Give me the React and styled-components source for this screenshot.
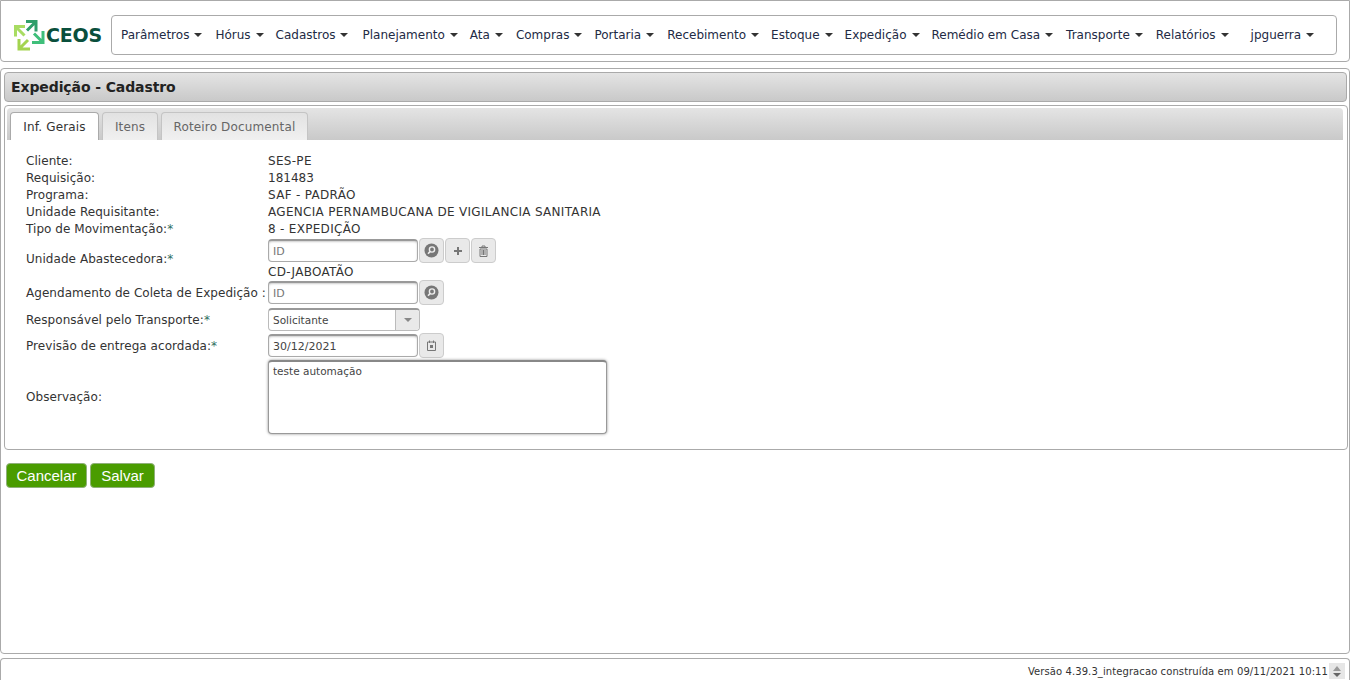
import React from 'react'
import styled, { createGlobalStyle } from 'styled-components'

const GlobalStyle = createGlobalStyle`
  html, body { margin: 0; padding: 0; height: 100%; background: #fff; }
  body {
    font-family: "DejaVu Sans", Verdana, sans-serif;
    font-size: 12px;
    color: #333;
  }
`

const Page = styled.div`
  height: 680px;
  display: flex;
  flex-direction: column;
  overflow: hidden;
`

const Header = styled.header`
  height: 62px;
  box-sizing: border-box;
  border: 1px solid #aaa;
  border-radius: 0 0 4px 4px;
  display: flex;
  align-items: center;
  padding: 7px 12px 0 13px;
  flex: none;
`

const Logo = styled.div`
  width: 97px;
  height: 32px;
  box-sizing: border-box;
  padding-top: 2px;
  display: flex;
  align-items: center;
  flex: none;
`

const LogoText = styled.span`
  font-family: "DejaVu Sans", sans-serif;
  font-weight: 700;
  font-size: 19px;
  line-height: 1;
  color: #0a4f3c;
  margin-left: 1px;
  letter-spacing: -0.2px;
`

const Nav = styled.nav`
  flex: 1;
  height: 40px;
  box-sizing: border-box;
  border: 1px solid #aaa;
  border-radius: 4px;
  display: flex;
  align-items: center;
  padding-left: 9px;
`

const NavItem = styled.span`
  display: flex;
  align-items: center;
  color: #222a44;
  white-space: nowrap;
  margin-right: ${p => p.$gap}px;
`

const Caret = styled.span`
  width: 0;
  height: 0;
  margin-left: 5px;
  border-left: 4px solid transparent;
  border-right: 4px solid transparent;
  border-top: 4px solid #333;
`

const Main = styled.main`
  flex: 1;
  margin: 6px 0 4px;
  box-sizing: border-box;
  border: 1px solid #aaa;
  border-radius: 4px;
  padding: 3px 1px 0 3px;
  display: flex;
  flex-direction: column;
`

const TitleBar = styled.div`
  height: 30px;
  box-sizing: border-box;
  border: 1px solid #aaa;
  border-radius: 4px;
  background: linear-gradient(#e4e4e4, #c9c9c9);
  display: flex;
  align-items: center;
  padding-left: 6px;
  margin-right: 1px;
  font-size: 14px;
  font-weight: 700;
  letter-spacing: -0.1px;
  color: #222;
`

const TabPanel = styled.section`
  margin-top: 3px;
  height: 345px;
  box-sizing: border-box;
  border: 1px solid #aaa;
  border-radius: 4px;
  padding: 2px;
`

const TabBar = styled.div`
  height: 32px;
  box-sizing: border-box;
  border-radius: 4px 4px 0 0;
  background: linear-gradient(#e4e4e4, #c9c9c9);
  margin-right: 2px;
  padding: 4px 0 0 3px;
  display: flex;
  gap: 3px;
`

const Tab = styled.div`
  box-sizing: border-box;
  height: 28px;
  width: ${p => p.$w}px;
  display: flex;
  align-items: center;
  justify-content: center;
  letter-spacing: 0.15px;
  border: 1px solid #c4c4c4;
  border-bottom: none;
  border-radius: 4px 4px 0 0;
  background: ${p => (p.$active ? '#fff' : 'linear-gradient(#e2e2e2, #f0f0f0)')};
  color: ${p => (p.$active ? '#333' : '#666')};
  ${p => p.$active && 'border-color: #aaa;'}
`

const Form = styled.div`
  padding: 12px 0 0 19px;
  display: flex;
  flex-direction: column;
`

const Row = styled.div`
  display: grid;
  grid-template-columns: 242px 1fr;
  align-items: center;
  min-height: 17px;
  margin-bottom: ${p => p.$mb || 0}px;
`

const Label = styled.span`
  color: #333;
  white-space: nowrap;
  letter-spacing: 0.05px;
`

const Req = styled.span`
  color: #2f6f5f;
`

const Value = styled.span`
  color: #333;
  letter-spacing: ${p => (p.$caps ? '0.3px' : '0')};
`

const Stack = styled.div`
  display: flex;
  flex-direction: column;
`

const StackedValue = styled(Value)`
  margin-top: 2px;
  line-height: 15px;
`

const Controls = styled.div`
  display: flex;
  align-items: center;
`

const Input = styled.div`
  box-sizing: border-box;
  width: 150px;
  height: 23px;
  border: 1px solid #aaa;
  border-top: 2px solid #999;
  border-radius: 4px;
  background: #fff;
  padding: 0 4px;
  display: flex;
  align-items: center;
  font-size: 11px;
  color: ${p => (p.$hint ? '#777' : '#444')};
  box-shadow: inset 0 1px 2px rgba(0, 0, 0, 0.2);
`

const IconButton = styled.div`
  box-sizing: border-box;
  width: 25px;
  height: 25px;
  margin-left: 1px;
  border: 1px solid #ccc;
  border-radius: 4px;
  background: #e9e9e9;
  display: flex;
  align-items: center;
  justify-content: center;
`

const Select = styled.div`
  box-sizing: border-box;
  width: 152px;
  height: 23px;
  border: 1px solid #bbb;
  border-top: 2px solid #999;
  border-radius: 4px;
  background: #fff;
  display: flex;
  align-items: stretch;
  font-size: 10.5px;
  color: #444;
`

const SelectText = styled.span`
  flex: 1;
  padding-left: 4px;
  display: flex;
  align-items: center;
`

const SelectArrow = styled.span`
  width: 23px;
  border-left: 1px solid #bbb;
  background: #e9e9e9;
  border-radius: 0 3px 3px 0;
  display: flex;
  align-items: center;
  justify-content: center;
  &::after {
    content: '';
    border-left: 4px solid transparent;
    border-right: 4px solid transparent;
    border-top: 4px solid #888;
  }
`

const TextArea = styled.div`
  box-sizing: border-box;
  width: 339px;
  height: 74px;
  border: 1px solid #999;
  border-top: 2px solid #888;
  border-radius: 4px;
  background: #fff;
  padding: 3px 4px;
  font-size: 10.5px;
  color: #444;
  box-shadow: 0 0 3px rgba(0, 0, 0, 0.45);
`

const Actions = styled.div`
  display: flex;
  gap: 3px;
  padding: 13px 0 0 2px;
`

const GreenButton = styled.div`
  box-sizing: border-box;
  height: 25px;
  width: ${p => p.$w}px;
  border: 1px solid #8fb07a;
  border-radius: 4px;
  background: #4a9c00;
  color: #fff;
  font-family: "Liberation Sans", Arial, sans-serif;
  font-size: 15px;
  display: flex;
  align-items: center;
  justify-content: center;
`

const Footer = styled.footer`
  height: 22px;
  box-sizing: border-box;
  border: 1px solid #aaa;
  border-bottom: none;
  border-radius: 4px 4px 0 0;
  display: flex;
  align-items: center;
  justify-content: flex-end;
  padding: 3px 4px 0 0;
  font-size: 10px;
  letter-spacing: 0.09px;
  color: #333;
  flex: none;
`

const Spinner = styled.div`
  width: 16px;
  height: 16px;
  margin-left: 1px;
  background: #e6e6e6;
  display: flex;
  flex-direction: column;
  align-items: center;
  justify-content: center;
  gap: 2px;
`

const SpinUp = styled.span`
  border-left: 4px solid transparent;
  border-right: 4px solid transparent;
  border-bottom: 5px solid #999;
`

const SpinDown = styled.span`
  border-left: 4px solid transparent;
  border-right: 4px solid transparent;
  border-top: 4px solid #666;
`

const LogoMark = () => (
  <svg width="31" height="31" viewBox="0 0 31 31" fill="none" strokeWidth="3">
    <path d="M12 1.5h10v10M22 1.5L13 10.5" stroke="#2f9e6a" />
    <path d="M11 6.5H1.5v10M1.5 6.5l9 9" stroke="#a8dc62" />
    <path d="M29 11v11.5H18M29 22.5l-9-9" stroke="#3fbf7a" />
    <path d="M5 19v10h11M5 29l9-9" stroke="#a3d44f" />
  </svg>
)

const SearchIcon = () => (
  <svg width="15" height="15" viewBox="0 0 15 15">
    <circle cx="7.5" cy="7.5" r="7" fill="#777" />
    <circle cx="8" cy="6.5" r="2.6" fill="none" stroke="#eee" strokeWidth="1.4" />
    <path d="M6 8.6L4 10.8" stroke="#eee" strokeWidth="1.6" />
  </svg>
)

const PlusIcon = () => (
  <svg width="10" height="10" viewBox="0 0 10 10">
    <path d="M5 1v8M1 5h8" stroke="#777" strokeWidth="2" />
  </svg>
)

const TrashIcon = () => (
  <svg width="11" height="12" viewBox="0 0 11 12">
    <path d="M1 2.5h9M4 2V1h3v1" stroke="#777" strokeWidth="1" fill="none" />
    <path d="M2 4h7v7.5H2zM4 5v5M5.5 5v5M7 5v5" stroke="#777" strokeWidth="1" fill="none" />
  </svg>
)

const CalendarIcon = () => (
  <svg width="11" height="11" viewBox="0 0 11 11">
    <path d="M1.5 2h8v8.5h-8zM3.5 0.5v2.5M7.5 0.5v2.5" stroke="#777" strokeWidth="1" fill="none" />
    <rect x="4" y="5" width="3" height="3" fill="#777" />
  </svg>
)

const menu = [
  ['Parâmetros', 13],
  ['Hórus', 12],
  ['Cadastros', 14],
  ['Planejamento', 12],
  ['Ata', 13],
  ['Compras', 12],
  ['Portaria', 13],
  ['Recebimento', 12],
  ['Estoque', 12],
  ['Expedição', 12],
  ['Remédio em Casa', 13],
  ['Transporte', 13],
  ['Relatórios', 22],
  ['jpguerra', 0],
]

export default function App() {
  return (
    <Page>
      <GlobalStyle />
      <Header>
        <Logo>
          <LogoMark />
          <LogoText>CEOS</LogoText>
        </Logo>
        <Nav>
          {menu.map(([name, gap]) => (
            <NavItem key={name} $gap={gap}>
              {name}
              <Caret />
            </NavItem>
          ))}
        </Nav>
      </Header>

      <Main>
        <TitleBar>Expedição - Cadastro</TitleBar>
        <TabPanel>
          <TabBar>
            <Tab $active $w={89}>Inf. Gerais</Tab>
            <Tab $w={56}>Itens</Tab>
            <Tab $w={147}>Roteiro Documental</Tab>
          </TabBar>
          <Form>
            <Row><Label>Cliente:</Label><Value $caps>SES-PE</Value></Row>
            <Row><Label>Requisição:</Label><Value>181483</Value></Row>
            <Row><Label>Programa:</Label><Value $caps>SAF - PADRÃO</Value></Row>
            <Row><Label>Unidade Requisitante:</Label><Value $caps>AGENCIA PERNAMBUCANA DE VIGILANCIA SANITARIA</Value></Row>
            <Row $mb={1}><Label>Tipo de Movimentação:<Req>*</Req></Label><Value $caps>8 - EXPEDIÇÃO</Value></Row>
            <Row>
              <Label>Unidade Abastecedora:<Req>*</Req></Label>
              <Stack>
                <Controls>
                  <Input $hint>ID</Input>
                  <IconButton><SearchIcon /></IconButton>
                  <IconButton><PlusIcon /></IconButton>
                  <IconButton><TrashIcon /></IconButton>
                </Controls>
                <StackedValue $caps>CD-JABOATÃO</StackedValue>
              </Stack>
            </Row>
            <Row $mb={3}>
              <Label>Agendamento de Coleta de Expedição :</Label>
              <Controls>
                <Input $hint>ID</Input>
                <IconButton><SearchIcon /></IconButton>
              </Controls>
            </Row>
            <Row $mb={2}>
              <Label>Responsável pelo Transporte:<Req>*</Req></Label>
              <Select>
                <SelectText>Solicitante</SelectText>
                <SelectArrow />
              </Select>
            </Row>
            <Row $mb={2}>
              <Label>Previsão de entrega acordada:<Req>*</Req></Label>
              <Controls>
                <Input>30/12/2021</Input>
                <IconButton><CalendarIcon /></IconButton>
              </Controls>
            </Row>
            <Row>
              <Label>Observação:</Label>
              <TextArea>teste automação</TextArea>
            </Row>
          </Form>
        </TabPanel>
        <Actions>
          <GreenButton $w={81}>Cancelar</GreenButton>
          <GreenButton $w={65}>Salvar</GreenButton>
        </Actions>
      </Main>

      <Footer>
        Versão 4.39.3_integracao construída em 09/11/2021 10:11
        <Spinner>
          <SpinUp />
          <SpinDown />
        </Spinner>
      </Footer>
    </Page>
  )
}
